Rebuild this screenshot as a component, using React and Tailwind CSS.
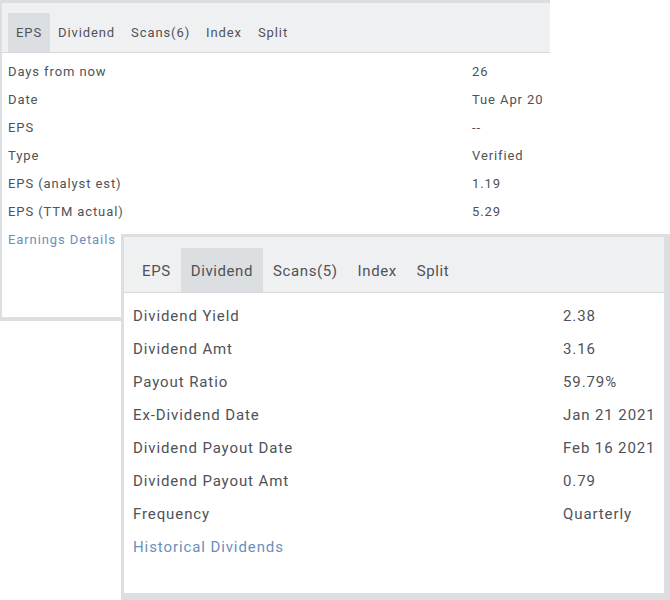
const epsRows = [
  ["Days from now", "26"],
  ["Date", "Tue Apr 20"],
  ["EPS", "--"],
  ["Type", "Verified"],
  ["EPS (analyst est)", "1.19"],
  ["EPS (TTM actual)", "5.29"],
];

const divRows = [
  ["Dividend Yield", "2.38"],
  ["Dividend Amt", "3.16"],
  ["Payout Ratio", "59.79%"],
  ["Ex-Dividend Date", "Jan 21 2021"],
  ["Dividend Payout Date", "Feb 16 2021"],
  ["Dividend Payout Amt", "0.79"],
  ["Frequency", "Quarterly"],
];

const font = { fontFamily: "Roboto, 'Liberation Sans', sans-serif" };

function Tabs({ tabs, active, big }) {
  return (
    <div className={big ? "flex items-end h-[56px] pl-2 bg-[#eff0f2] border-b border-[#d6d8db]" : "flex items-end h-[50px] pl-[6px] bg-[#eff0f2] border-b border-[#d6d8db]"}>
      {tabs.map((t) => (
        <div
          key={t}
          className={
            (big ? "h-[44px] px-[10px] pt-[3px] text-[15px] tracking-[0.6px] " : "h-[39px] px-2 text-[13px] tracking-[0.9px] ") +
            "flex items-center text-[#4f5257] " +
            (t === active ? "bg-[#dcdfe2]" : "")
          }
        >
          {t}
        </div>
      ))}
    </div>
  );
}

export default function App() {
  return (
    <div className="relative w-[670px] h-[600px] bg-white overflow-hidden" style={font}>
      {/* EPS panel */}
      <div className="absolute left-0 top-0 w-[550px] h-[321px] bg-white border-t-[3px] border-l-2 border-b-4 border-[#dcdee1]">
        <Tabs tabs={["EPS", "Dividend", "Scans(6)", "Index", "Split"]} active="EPS" />
        <div className="pt-[5px] pl-[6px] text-[13px] tracking-[0.9px] text-[#4f5257]">
          {epsRows.map(([k, v]) => (
            <div key={k} className="flex items-center h-[28px]">
              <div className="w-[464px]">{k}</div>
              <div>{v}</div>
            </div>
          ))}
          <div className="flex items-center h-[28px] text-[#6b8fbc]">Earnings Details</div>
        </div>
      </div>

      {/* Dividend panel */}
      <div className="absolute left-[121px] top-[234px] w-[549px] h-[366px] bg-white border-t-[3px] border-l-[3px] border-r-[6px] border-b-[7px] border-[#dcdee1]">
        <Tabs tabs={["EPS", "Dividend", "Scans(5)", "Index", "Split"]} active="Dividend" big />
        <div className="pt-[7px] pl-[9px] text-[15px] tracking-[0.9px] text-[#4f5257]">
          {divRows.map(([k, v]) => (
            <div key={k} className="flex items-center h-[33px]">
              <div className="w-[430px]">{k}</div>
              <div>{v}</div>
            </div>
          ))}
          <div className="flex items-center h-[33px] text-[#6b8fbc]">Historical Dividends</div>
        </div>
      </div>
    </div>
  );
}
